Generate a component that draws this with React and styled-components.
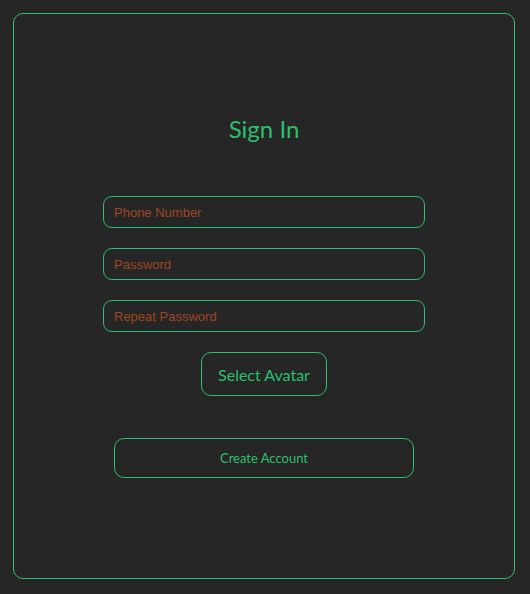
import React from 'react';
import styled, { createGlobalStyle } from 'styled-components';

const green = '#2dbf6e';

const GlobalStyle = createGlobalStyle`
  html, body {
    margin: 0;
    padding: 0;
    background-color: #262626;
  }
  body {
    font-family: Lato, "Noto Sans", sans-serif;
  }
`;

const Page = styled.div`
  padding: 13px;
`;

const Card = styled.div`
  box-sizing: border-box;
  width: 502px;
  height: 566px;
  border: solid 1px ${green};
  border-radius: 10px;
  display: flex;
  flex-direction: column;
  align-items: center;
  padding-top: 100px;
`;

const Title = styled.h1`
  margin: 0 0 52px;
  font-size: 24px;
  line-height: 30px;
  font-weight: 400;
  color: ${green};
`;

const Form = styled.form`
  display: flex;
  flex-direction: column;
  align-items: center;
`;

const Input = styled.input`
  box-sizing: border-box;
  width: 322px;
  height: 32px;
  margin-bottom: 20px;
  padding: 0 10px;
  background: transparent;
  border: solid 1px ${green};
  border-radius: 9px;
  font-family: "Liberation Sans", Arial, sans-serif;
  font-size: 13px;
  color: #c8c8c8;
  outline: none;

  &::placeholder {
    color: #9e4622;
  }
`;

const Button = styled.button`
  box-sizing: border-box;
  width: ${(p) => p.$width}px;
  height: ${(p) => p.$height}px;
  margin-top: ${(p) => p.$top}px;
  background: transparent;
  border: solid 1px ${green};
  border-radius: 10px;
  font-family: Lato, "Noto Sans", sans-serif;
  font-size: ${(p) => p.$size}px;
  color: ${green};
  cursor: pointer;
`;

const App = () => (
  <Page>
    <GlobalStyle />
    <Card>
      <Title>Sign In</Title>
      <Form onSubmit={(e) => e.preventDefault()}>
        <Input type="text" placeholder="Phone Number" />
        <Input type="password" placeholder="Password" />
        <Input type="password" placeholder="Repeat Password" />
        <Button type="button" $width={126} $height={44} $top={0} $size={16}>
          Select Avatar
        </Button>
        <Button type="submit" $width={300} $height={40} $top={42} $size={13}>
          Create Account
        </Button>
      </Form>
    </Card>
  </Page>
);

export default App;
